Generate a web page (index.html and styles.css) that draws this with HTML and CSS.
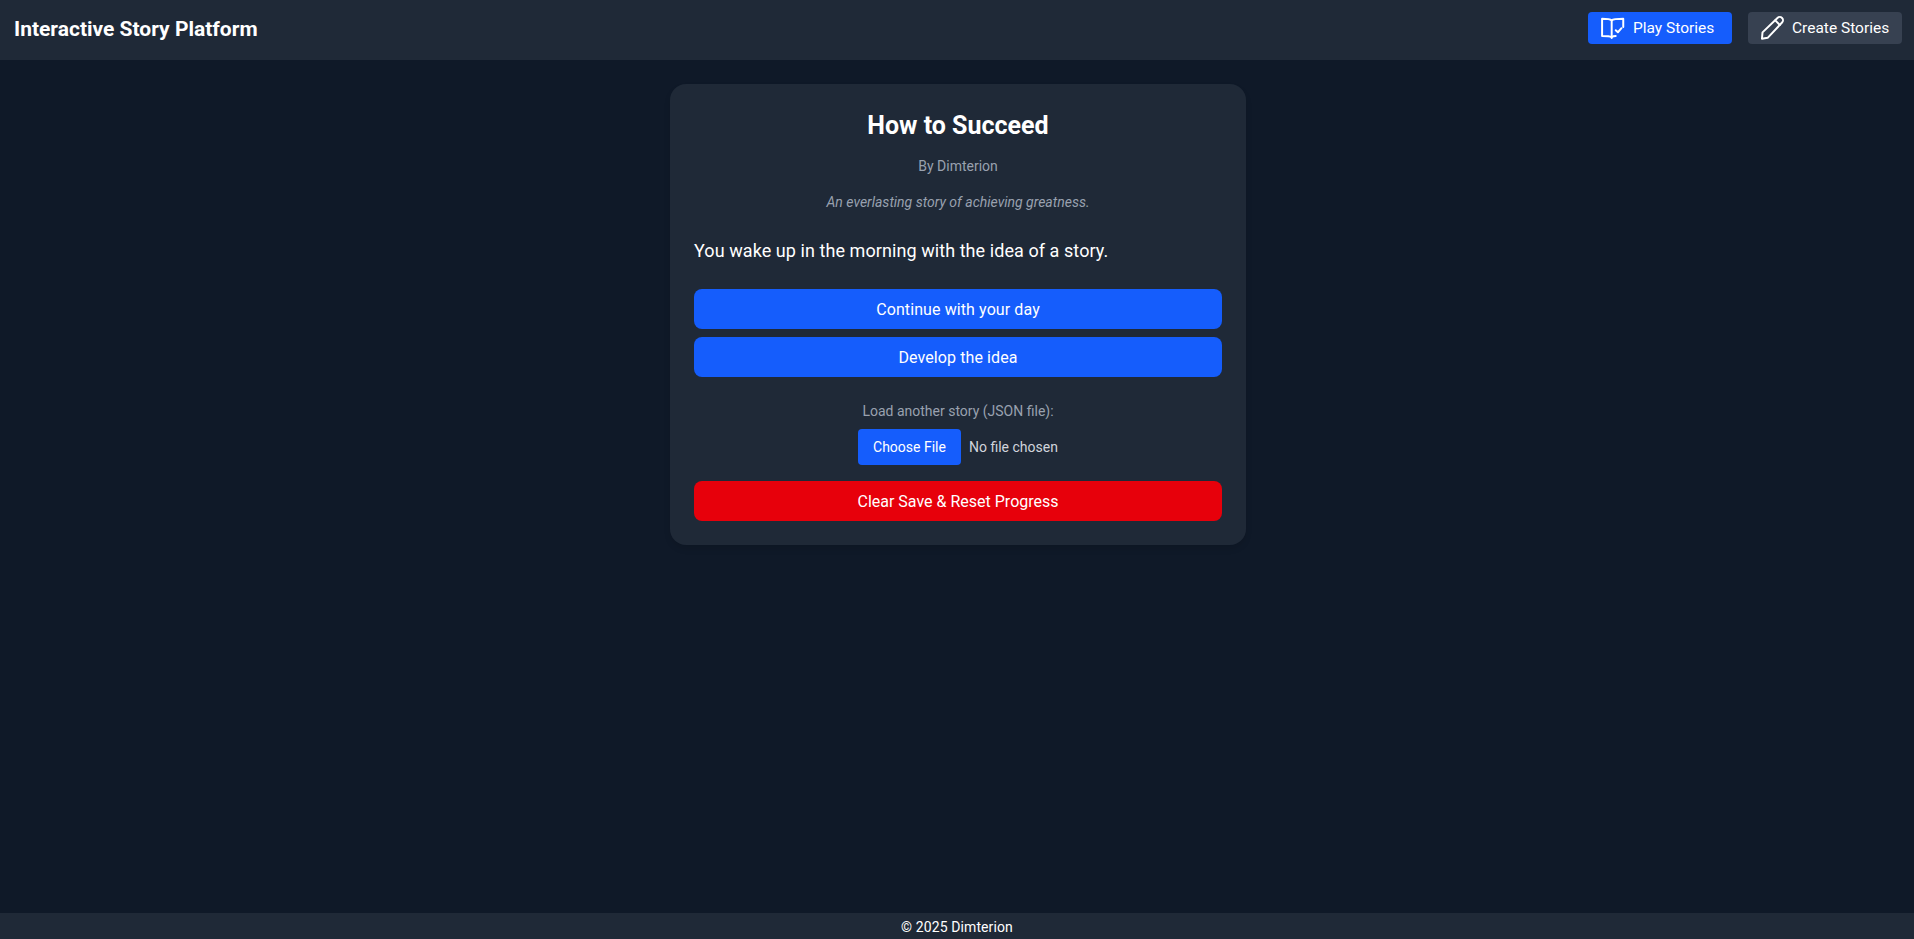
FILE: index.html
```html
<!DOCTYPE html>
<html lang="en">
<head>
    <meta charset="UTF-8">
    <meta name="viewport" content="width=device-width, initial-scale=1.0">
    <title>Interactive Story Platform</title>
    <link rel="stylesheet" href="styles.css">
</head>
<body>

    <!-- Top bar -->
    <header class="topbar">
        <h1 class="brand">Interactive Story Platform</h1>
        <nav class="nav">
            <a class="nav-link nav-play" href="#">
                <svg class="nav-icon" viewBox="0 0 22 22" fill="none" stroke="currentColor" stroke-width="1.800" stroke-linecap="round" stroke-linejoin="round">
                    <path d="M9.800 4C8.500 2.800 6 2.500 1 2.500v15.800c4.500 0 7.300 .2 8.800 1 1-.7 2.200-1 3.700-1"/>
                    <path d="M9.800 4C11 2.800 14.500 2.500 20.400 2.500V10"/>
                    <path d="M9.800 4v16.200"/>
                    <path d="M13.500 13l2 1.900 3.300-3.700"/>
                </svg>
                Play Stories
            </a>
            <a class="nav-link nav-create" href="#">
                <svg class="nav-icon" viewBox="0 0 22 22" fill="none" stroke="currentColor" stroke-width="1.800" stroke-linecap="round" stroke-linejoin="round">
                    <path d="M16 1.800a2.900 2.900 0 0 1 4.200 4.200L7 20l-5.200 .8L2.300 15z"/>
                    <path d="M14 4l4.200 4.200"/>
                </svg>
                Create Stories
            </a>
        </nav>
    </header>

    <main class="main">
        <section class="card">
            <h2 class="story-title">How to Succeed</h2>
            <p class="story-author">By Dimterion</p>
            <p class="story-desc">An everlasting story of achieving greatness.</p>
            <p class="story-text">You wake up in the morning with the idea of a story.</p>

            <div class="choices">
                <button class="btn btn-blue">Continue with your day</button>
                <button class="btn btn-blue">Develop the idea</button>
            </div>

            <div class="loader">
                <label class="loader-label" for="storyFile">Load another story (JSON file):</label>
                <input class="loader-input" type="file" id="storyFile" accept=".json">
            </div>

            <button class="btn btn-red">Clear Save &amp; Reset Progress</button>
        </section>
    </main>

    <footer class="footer">© 2025 Dimterion</footer>

</body>
</html>
```
FILE: styles.css
```css
/* General */
* {
    box-sizing: border-box;
}

body {
    margin: 0;
    height: 100vh;
    display: flex;
    flex-direction: column;
    background-color: #0f1928;
    color: #fff;
    font-family: Roboto, "Open Sans", sans-serif;
}

/* Top bar */
.topbar {
    height: 60px;
    flex-shrink: 0;
    display: flex;
    align-items: center;
    justify-content: space-between;
    padding: 0 12px 4px 14px;
    background-color: #1f2937;
}

.brand {
    margin: 2px 0 0;
    font-size: 21px;
    font-weight: 700;
}

.nav {
    display: flex;
    gap: 16px;
}

.nav-link {
    height: 32px;
    display: flex;
    align-items: center;
    gap: 8px;
    border-radius: 4px;
    background-color: #374151;
    color: #fff;
    font-size: 15.500px;
    text-decoration: none;
}

.nav-play {
    width: 144px;
    padding-left: 13px;
    background-color: #155dfc;
}

.nav-create {
    width: 154px;
    padding-left: 12px;
}

.nav-icon {
    width: 24px;
    height: 24px;
}

/* Card */
.main {
    flex: 1;
    padding: 24px 0 0 2px;
}

.card {
    width: 576px;
    margin: 0 auto;
    padding: 25px 24px 24px;
    border-radius: 16px;
    background-color: #1f2937;
    box-shadow: 0 4px 6px rgba(0, 0, 0, 0.1);
}

.story-title {
    margin: 0 0 13px;
    text-align: center;
    font-size: 25px;
    line-height: 34px;
    font-weight: 700;
}

.story-author,
.story-desc {
    margin: 0 0 16px;
    text-align: center;
    font-size: 14px;
    line-height: 20px;
    color: #99a1af;
}

.story-desc {
    font-style: italic;
    margin-bottom: 25px;
}

.story-text {
    margin: 0 0 24px;
    font-size: 18px;
    line-height: 28px;
    letter-spacing: 0.07px;
}

/* Buttons */
.choices {
    display: flex;
    flex-direction: column;
    gap: 8px;
}

.btn {
    display: block;
    width: 100%;
    height: 40px;
    border: none;
    border-radius: 8px;
    color: #fff;
    font-family: inherit;
    font-size: 16px;
}

.btn-blue {
    background-color: #155dfc;
    letter-spacing: 0.1px;
}

.btn-red {
    background-color: #e7000b;
}

/* File loader */
.loader {
    margin: 24px 0 16px;
    display: flex;
    flex-direction: column;
    align-items: center;
    gap: 8px;
}

.loader-label {
    font-size: 14px;
    line-height: 20px;
    color: #99a1af;
}

.loader-input {
    width: 204px;
    margin-left: 4px;
    color: #d1d5dc;
    font-family: inherit;
    font-size: 14px;
}

.loader-input::file-selector-button {
    width: 103px;
    height: 36px;
    margin-right: 8px;
    padding: 0;
    border: none;
    border-radius: 4px;
    background-color: #155dfc;
    color: #fff;
    font-family: inherit;
    font-size: 14px;
}

/* Footer */
.footer {
    height: 26px;
    flex-shrink: 0;
    display: flex;
    align-items: center;
    justify-content: center;
    padding-top: 2px;
    background-color: #1f2937;
    font-size: 14px;
    letter-spacing: 0.1px;
}
```
